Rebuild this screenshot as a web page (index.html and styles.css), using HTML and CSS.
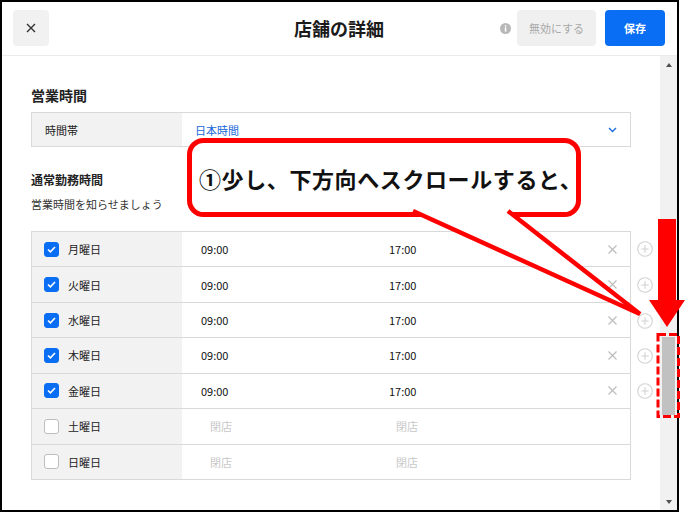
FILE: index.html
```html
<!DOCTYPE html>
<html lang="ja">
<head>
<meta charset="utf-8">
<title>店舗の詳細</title>
<link rel="stylesheet" href="styles.css">
</head>
<body>
<div class="frame">
  <header class="topbar">
    <div class="topbar-left">
      <button class="close-btn" aria-label="閉じる">
        <svg width="10" height="10" viewBox="0 0 10 10"><path d="M1 1L9 9M9 1L1 9" stroke="#333" stroke-width="1.4" fill="none"/></svg>
      </button>
    </div>
    <h1 class="title">店舗の詳細</h1>
    <div class="topbar-right">
      <svg class="info-icon" width="11" height="11" viewBox="0 0 11 11"><circle cx="5.5" cy="5.5" r="5.5" fill="#b8b8b8"/><rect x="4.8" y="2.2" width="1.5" height="1.4" fill="#fff"/><rect x="4.8" y="4.4" width="1.5" height="4.2" fill="#fff"/></svg>
      <button class="btn btn-disabled">無効にする</button>
      <button class="btn btn-primary">保存</button>
    </div>
  </header>

  <div class="body">
    <main class="content">
      <h2 class="section-title">営業時間</h2>
      <div class="select-row">
        <div class="select-label">時間帯</div>
        <div class="select-value">
          <span>日本時間</span>
          <svg width="9" height="6" viewBox="0 0 9 6"><path d="M1 1L4.5 4.5L8 1" stroke="#1a6fe0" stroke-width="1.4" fill="none"/></svg>
        </div>
      </div>

      <h3 class="sub-title">通常勤務時間</h3>
      <p class="sub-desc">営業時間を知らせましょう</p>

      <div class="days">
        <div class="day-row">
          <div class="day-cells">
            <div class="day-label"><span class="check checked"><svg width="9" height="7" viewBox="0 0 9 7"><path d="M1 3.5L3.4 5.8L8 1" stroke="#fff" stroke-width="1.6" fill="none"/></svg></span><span>月曜日</span></div>
            <div class="day-times"><span class="t-start">09:00</span><span class="t-end">17:00</span><svg class="remove" width="9" height="9" viewBox="0 0 9 9"><path d="M0.5 0.5L8.5 8.5M8.5 0.5L0.5 8.5" stroke="#bdbdbd" stroke-width="1.2" fill="none"/></svg></div>
          </div>
          <svg class="plus" width="16" height="16" viewBox="0 0 16 16"><circle cx="8" cy="8" r="7.3" stroke="#d2d2d2" stroke-width="1.1" fill="none"/><path d="M8 4.3V11.7M4.3 8H11.7" stroke="#d2d2d2" stroke-width="1.1"/></svg>
        </div>
        <div class="day-row">
          <div class="day-cells">
            <div class="day-label"><span class="check checked"><svg width="9" height="7" viewBox="0 0 9 7"><path d="M1 3.5L3.4 5.8L8 1" stroke="#fff" stroke-width="1.6" fill="none"/></svg></span><span>火曜日</span></div>
            <div class="day-times"><span class="t-start">09:00</span><span class="t-end">17:00</span><svg class="remove" width="9" height="9" viewBox="0 0 9 9"><path d="M0.5 0.5L8.5 8.5M8.5 0.5L0.5 8.5" stroke="#bdbdbd" stroke-width="1.2" fill="none"/></svg></div>
          </div>
          <svg class="plus" width="16" height="16" viewBox="0 0 16 16"><circle cx="8" cy="8" r="7.3" stroke="#d2d2d2" stroke-width="1.1" fill="none"/><path d="M8 4.3V11.7M4.3 8H11.7" stroke="#d2d2d2" stroke-width="1.1"/></svg>
        </div>
        <div class="day-row">
          <div class="day-cells">
            <div class="day-label"><span class="check checked"><svg width="9" height="7" viewBox="0 0 9 7"><path d="M1 3.5L3.4 5.8L8 1" stroke="#fff" stroke-width="1.6" fill="none"/></svg></span><span>水曜日</span></div>
            <div class="day-times"><span class="t-start">09:00</span><span class="t-end">17:00</span><svg class="remove" width="9" height="9" viewBox="0 0 9 9"><path d="M0.5 0.5L8.5 8.5M8.5 0.5L0.5 8.5" stroke="#bdbdbd" stroke-width="1.2" fill="none"/></svg></div>
          </div>
          <svg class="plus" width="16" height="16" viewBox="0 0 16 16"><circle cx="8" cy="8" r="7.3" stroke="#d2d2d2" stroke-width="1.1" fill="none"/><path d="M8 4.3V11.7M4.3 8H11.7" stroke="#d2d2d2" stroke-width="1.1"/></svg>
        </div>
        <div class="day-row">
          <div class="day-cells">
            <div class="day-label"><span class="check checked"><svg width="9" height="7" viewBox="0 0 9 7"><path d="M1 3.5L3.4 5.8L8 1" stroke="#fff" stroke-width="1.6" fill="none"/></svg></span><span>木曜日</span></div>
            <div class="day-times"><span class="t-start">09:00</span><span class="t-end">17:00</span><svg class="remove" width="9" height="9" viewBox="0 0 9 9"><path d="M0.5 0.5L8.5 8.5M8.5 0.5L0.5 8.5" stroke="#bdbdbd" stroke-width="1.2" fill="none"/></svg></div>
          </div>
          <svg class="plus" width="16" height="16" viewBox="0 0 16 16"><circle cx="8" cy="8" r="7.3" stroke="#d2d2d2" stroke-width="1.1" fill="none"/><path d="M8 4.3V11.7M4.3 8H11.7" stroke="#d2d2d2" stroke-width="1.1"/></svg>
        </div>
        <div class="day-row">
          <div class="day-cells">
            <div class="day-label"><span class="check checked"><svg width="9" height="7" viewBox="0 0 9 7"><path d="M1 3.5L3.4 5.8L8 1" stroke="#fff" stroke-width="1.6" fill="none"/></svg></span><span>金曜日</span></div>
            <div class="day-times"><span class="t-start">09:00</span><span class="t-end">17:00</span><svg class="remove" width="9" height="9" viewBox="0 0 9 9"><path d="M0.5 0.5L8.5 8.5M8.5 0.5L0.5 8.5" stroke="#bdbdbd" stroke-width="1.2" fill="none"/></svg></div>
          </div>
          <svg class="plus" width="16" height="16" viewBox="0 0 16 16"><circle cx="8" cy="8" r="7.3" stroke="#d2d2d2" stroke-width="1.1" fill="none"/><path d="M8 4.3V11.7M4.3 8H11.7" stroke="#d2d2d2" stroke-width="1.1"/></svg>
        </div>
        <div class="day-row">
          <div class="day-cells closed">
            <div class="day-label"><span class="check"></span><span>土曜日</span></div>
            <div class="day-times"><span class="t-start">閉店</span><span class="t-end">閉店</span></div>
          </div>
        </div>
        <div class="day-row">
          <div class="day-cells closed">
            <div class="day-label"><span class="check"></span><span>日曜日</span></div>
            <div class="day-times"><span class="t-start">閉店</span><span class="t-end">閉店</span></div>
          </div>
        </div>
      </div>
    </main>

    <div class="scrollbar">
      <div class="sb-btn"><span class="tri-up"></span></div>
      <div class="sb-track"><div class="sb-thumb"></div></div>
      <div class="sb-btn"><span class="tri-down"></span></div>
    </div>
  </div>

  <svg class="annot" width="688" height="512" viewBox="0 0 688 512">
    <rect x="189.5" y="140.5" width="389" height="74" rx="14" ry="14" fill="#fff" stroke="#ff0000" stroke-width="5"/>
    <polyline points="413,211 640,314 508,211" fill="#fff" stroke="#ff0000" stroke-width="4.5" stroke-linejoin="miter"/>
    <polygon points="658,219 676,219 676,300 685,300 667,327 649,300 658,300" fill="#ff0000"/>
    <rect x="658" y="334.5" width="20.5" height="82" fill="none" stroke="#ff0000" stroke-width="3" stroke-dasharray="8 3"/>
  </svg>
  <div class="callout-text">①少し、下方向へスクロールすると、</div>
</div>
</body>
</html>
```

FILE: styles.css
```css
* { box-sizing: border-box; }

html, body {
  margin: 0;
  padding: 0;
  background: #fff;
}

body {
  font-family: "Noto Sans CJK JP", "Noto Sans", sans-serif;
  color: #222;
  width: 688px;
  height: 512px;
  overflow: hidden;
}

.frame {
  position: relative;
  width: 679px;
  height: 512px;
  border: 2px solid #000;
  display: flex;
  flex-direction: column;
  background: #fff;
}

/* header */
.topbar {
  height: 54px;
  flex: none;
  display: grid;
  grid-template-columns: 1fr auto 1fr;
  align-items: center;
  padding: 0 12px 1px 11px;
  border-bottom: 1px solid #ebebeb;
}

.topbar-left { display: flex; }

.close-btn {
  width: 36px;
  height: 36px;
  border: 0;
  border-radius: 4px;
  background: #f1f1f1;
  display: flex;
  align-items: center;
  justify-content: center;
  padding: 0;
}

.title {
  margin: 0;
  font-size: 18px;
  font-weight: 700;
  color: #1a1a1a;
  line-height: 24px;
}

.topbar-right {
  display: flex;
  justify-content: flex-end;
  align-items: center;
}

.info-icon { margin-right: 6px; }

.btn {
  height: 36px;
  border: 0;
  border-radius: 4px;
  font-family: "Noto Sans CJK JP", sans-serif;
  font-size: 11px;
  padding: 0;
}

.btn-disabled {
  width: 79px;
  background: #f0f0f0;
  color: #a9a9a9;
}

.btn-primary {
  width: 60px;
  margin-left: 9px;
  background: #0a6ef5;
  color: #fff;
  font-weight: 700;
}

/* body */
.body {
  flex: 1;
  display: flex;
  min-height: 0;
}

.content {
  flex: 1;
  padding: 29px 29px 0 29px;
  overflow: hidden;
}

.section-title {
  margin: 0;
  font-size: 14px;
  font-weight: 700;
  line-height: 20px;
  color: #222;
}

.select-row {
  margin-top: 7px;
  height: 35px;
  border: 1px solid #d9d9d9;
  display: flex;
  font-size: 11px;
}

.select-label {
  width: 150px;
  background: #f2f2f2;
  display: flex;
  align-items: center;
  padding-left: 13px;
  color: #222;
}

.select-value {
  flex: 1;
  display: flex;
  align-items: center;
  justify-content: space-between;
  padding: 0 13px 0 13px;
  color: #1868d8;
}

.sub-title {
  margin: 24px 0 0;
  font-size: 12px;
  font-weight: 700;
  line-height: 18px;
  color: #222;
}

.sub-desc {
  margin: 6px 0 0;
  font-size: 11px;
  line-height: 18px;
  color: #333;
}

.days {
  margin-top: 18px;
  display: flex;
  flex-direction: column;
}

.day-row {
  display: flex;
  align-items: center;
  margin-right: -29px;
}

.day-cells {
  width: 600px;
  height: 35.43px;
  display: flex;
  border: 1px solid #d9d9d9;
  border-top: 0;
  font-size: 11px;
}

.day-row:first-child .day-cells {
  border-top: 1px solid #d9d9d9;
  height: 36.43px;
}

.day-label {
  width: 150px;
  background: #f2f2f2;
  display: flex;
  align-items: center;
  padding-left: 12px;
  gap: 9px;
  color: #222;
}

.check {
  width: 15px;
  height: 15px;
  border-radius: 3px;
  border: 1px solid #bdbdbd;
  background: #fff;
  display: flex;
  align-items: center;
  justify-content: center;
  flex: none;
}

.check.checked {
  border-color: #0a6ef5;
  background: #0a6ef5;
}

.day-times {
  flex: 1;
  display: flex;
  align-items: center;
  padding-left: 19px;
  padding-right: 13px;
  color: #111;
}

.t-start { width: 188px; }
.t-end { flex: 1; }

.closed .day-times { color: #c8c8c8; }
.closed .t-start { padding-left: 9px; }
.closed .t-end { padding-left: 7px; }

.remove { flex: none; }

.plus {
  margin-left: 6px;
  flex: none;
}

/* scrollbar */
.scrollbar {
  width: 17px;
  flex: none;
  background: #f1f1f1;
  display: flex;
  flex-direction: column;
}

.sb-btn {
  height: 17px;
  display: flex;
  align-items: center;
  justify-content: center;
}

.tri-up {
  width: 0;
  height: 0;
  border-left: 3.5px solid transparent;
  border-right: 3.5px solid transparent;
  border-bottom: 4px solid #505050;
}

.tri-down {
  width: 0;
  height: 0;
  border-left: 3.5px solid transparent;
  border-right: 3.5px solid transparent;
  border-top: 4px solid #505050;
}

.sb-track {
  flex: 1;
  padding: 264px 2px 0 2px;
}

.sb-thumb {
  height: 78px;
  background: #c1c1c1;
}

/* annotation overlay */
.annot {
  position: absolute;
  left: -2px;
  top: -2px;
  pointer-events: none;
}

.callout-text {
  position: absolute;
  left: 197px;
  top: 161px;
  font-size: 22px;
  line-height: 30px;
  font-weight: 700;
  color: #111;
  white-space: nowrap;
  letter-spacing: 0.6px;
}
```
